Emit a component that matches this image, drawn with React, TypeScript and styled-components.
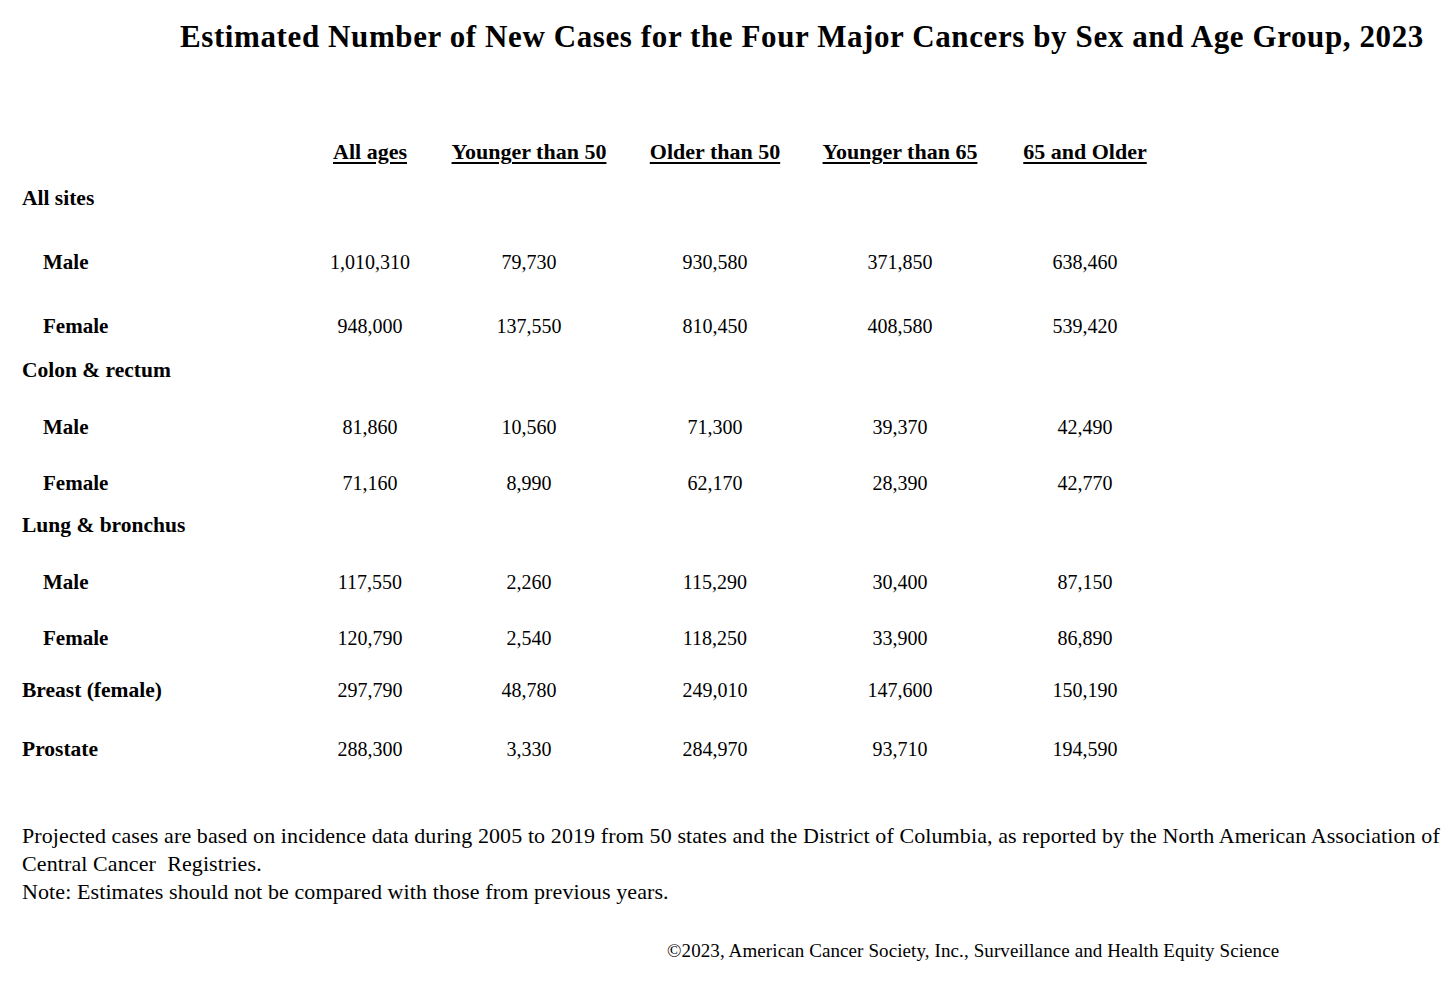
import styled, { createGlobalStyle } from "styled-components";

const GlobalStyle = createGlobalStyle`
  body {
    margin: 0;
    background: #ffffff;
    color: #000000;
    font-family: "Liberation Serif", "Times New Roman", serif;
  }
`;

const columns = "278px 140px 178px 194px 176px 194px";

interface Row {
  label: string;
  kind: "group" | "sub" | "single";
  gap: number;
  values?: string[];
}

const headers = [
  "All ages",
  "Younger than 50",
  "Older than 50",
  "Younger than 65",
  "65 and Older",
];

const rows: Row[] = [
  { label: "All sites", kind: "group", gap: 22 },
  { label: "Male", kind: "sub", gap: 40, values: ["1,010,310", "79,730", "930,580", "371,850", "638,460"] },
  { label: "Female", kind: "sub", gap: 40, values: ["948,000", "137,550", "810,450", "408,580", "539,420"] },
  { label: "Colon & rectum", kind: "group", gap: 20 },
  { label: "Male", kind: "sub", gap: 33, values: ["81,860", "10,560", "71,300", "39,370", "42,490"] },
  { label: "Female", kind: "sub", gap: 32, values: ["71,160", "8,990", "62,170", "28,390", "42,770"] },
  { label: "Lung & bronchus", kind: "group", gap: 18 },
  { label: "Male", kind: "sub", gap: 33, values: ["117,550", "2,260", "115,290", "30,400", "87,150"] },
  { label: "Female", kind: "sub", gap: 32, values: ["120,790", "2,540", "118,250", "33,900", "86,890"] },
  { label: "Breast (female)", kind: "single", gap: 28, values: ["297,790", "48,780", "249,010", "147,600", "150,190"] },
  { label: "Prostate", kind: "single", gap: 35, values: ["288,300", "3,330", "284,970", "93,710", "194,590"] },
];

const Page = styled.div`
  width: 1455px;
  padding: 17px 0 0 22px;
  box-sizing: border-box;
`;

const Title = styled.h1`
  margin: 0;
  padding-left: 158px;
  font-size: 31px;
  line-height: 40px;
  font-weight: bold;
  letter-spacing: 0.6px;
  white-space: nowrap;
`;

const Table = styled.div`
  margin-top: 83px;
`;

const TableRow = styled.div<{ $gap: number }>`
  display: grid;
  grid-template-columns: ${columns};
  align-items: center;
  margin-top: ${(p) => p.$gap}px;
  height: 24px;
  font-size: 20px;
  line-height: 24px;
`;

const HeaderCell = styled.div`
  text-align: center;
  font-size: 22px;
  font-weight: bold;
  text-decoration: underline;
  text-underline-offset: 3px;
  white-space: nowrap;
`;

const Label = styled.div<{ $indent: boolean }>`
  font-weight: bold;
  font-size: ${(p) => (p.$indent ? 21 : 21.5)}px;
  padding-left: ${(p) => (p.$indent ? 21 : 0)}px;
  white-space: nowrap;
`;

const Value = styled.div`
  text-align: center;
  white-space: nowrap;
`;

const Notes = styled.div`
  margin-top: 61px;
  font-size: 22px;
  line-height: 28px;
  letter-spacing: 0.1px;
  white-space: nowrap;
`;

const Copyright = styled.div`
  margin-top: 33px;
  padding-left: 645px;
  font-size: 19px;
  line-height: 24px;
  letter-spacing: 0.1px;
  white-space: nowrap;
`;

export default function App() {
  return (
    <>
      <GlobalStyle />
      <Page>
        <Title>
          Estimated Number of New Cases for the Four Major Cancers by Sex and
          Age Group, 2023
        </Title>
        <Table>
          <TableRow $gap={0}>
            <div />
            {headers.map((h) => (
              <HeaderCell key={h}>{h}</HeaderCell>
            ))}
          </TableRow>
          {rows.map((r, i) => (
            <TableRow key={i} $gap={r.gap}>
              <Label $indent={r.kind === "sub"}>{r.label}</Label>
              {(r.values ?? []).map((v, j) => (
                <Value key={j}>{v}</Value>
              ))}
            </TableRow>
          ))}
        </Table>
        <Notes>
          Projected cases are based on incidence data during 2005 to 2019 from
          50 states and the District of Columbia, as reported by the North
          American Association of
          <br />
          Central Cancer&nbsp; Registries.
          <br />
          Note: Estimates should not be compared with those from previous
          years.
        </Notes>
        <Copyright>
          ©2023, American Cancer Society, Inc., Surveillance and Health Equity
          Science
        </Copyright>
      </Page>
    </>
  );
}
